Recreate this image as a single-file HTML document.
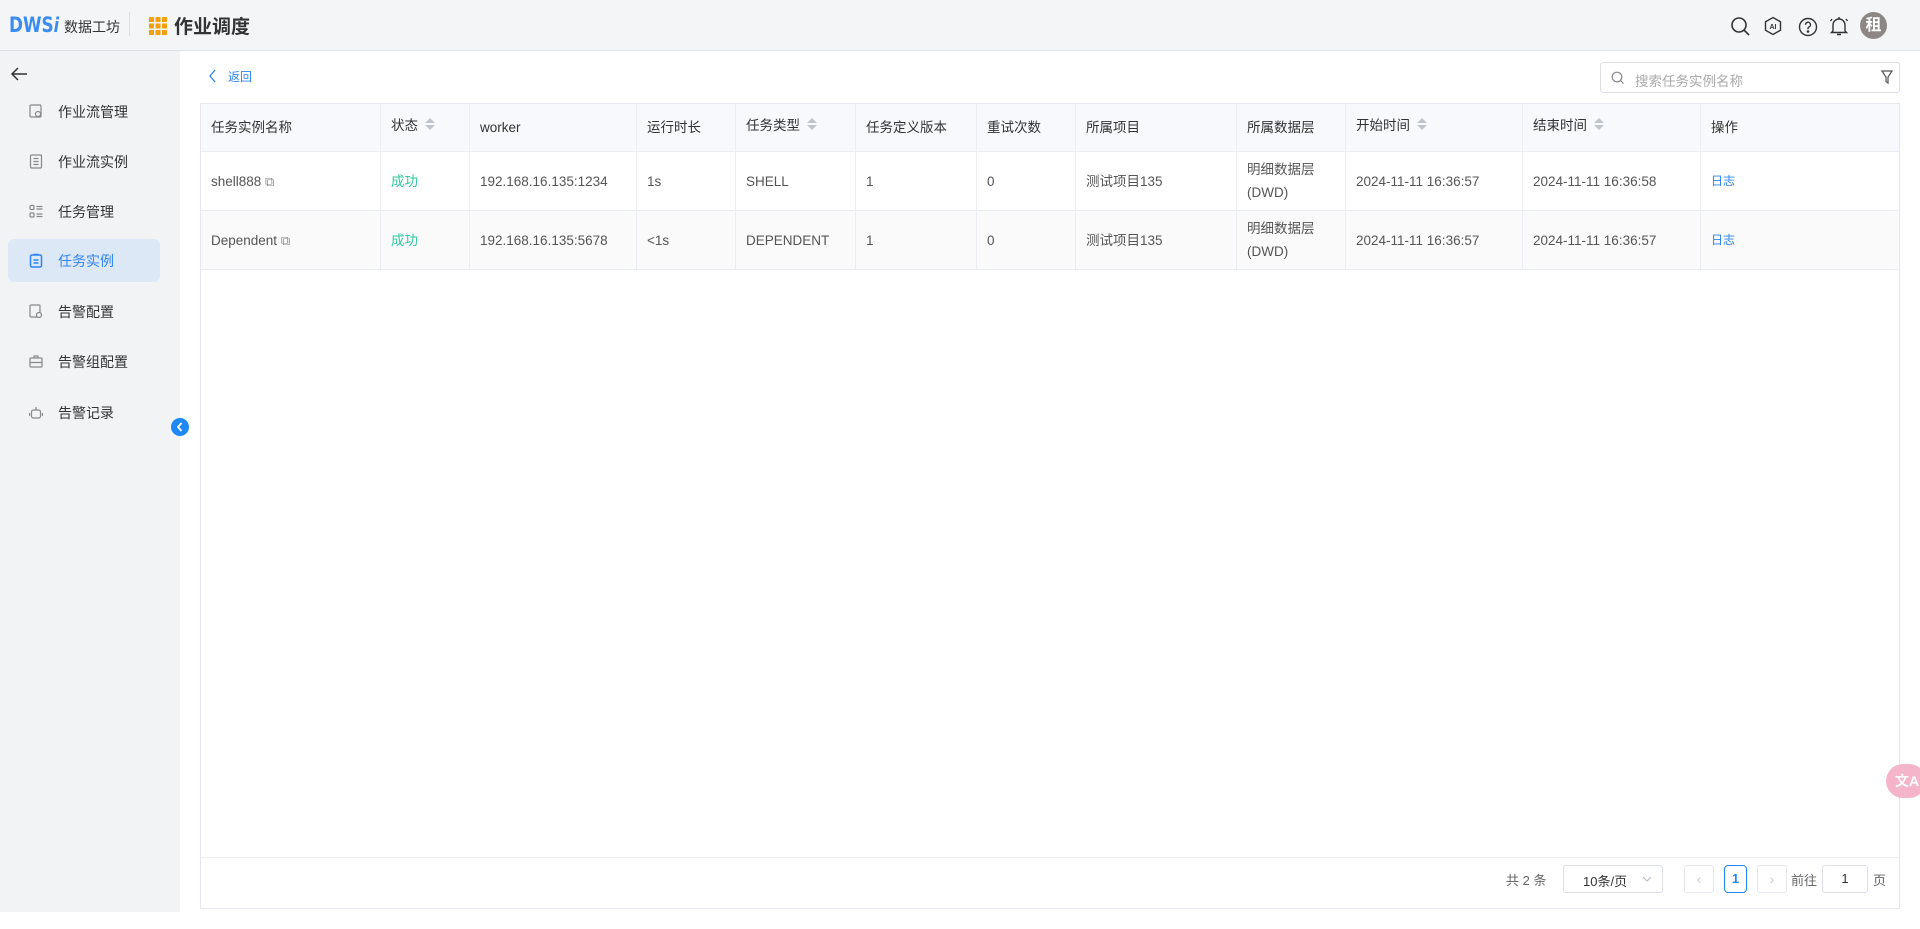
<!DOCTYPE html>
<html><head><meta charset="utf-8"><style>
*{box-sizing:border-box;margin:0;padding:0}
body{width:1920px;height:929px;overflow:hidden;background:#fff;font-family:"Liberation Sans","Noto Sans CJK SC",sans-serif;color:#333;position:relative}
.hdr{position:absolute;left:0;top:0;width:1920px;height:51px;background:#f4f5f7;border-bottom:1px solid #dcdfe6}
.side{position:absolute;left:0;top:51px;width:180px;height:861px;background:#f2f3f5}
.item{position:absolute;left:8px;width:152px;height:43px;display:flex;align-items:center;padding-left:50px;font-size:14px;color:#333}
.item svg{position:absolute;left:21px;top:14px}
.item.act{background:#dde8f6;color:#2e84f0;border-radius:6px}
.tbl{position:absolute;left:200px;top:103px;width:1700px;height:806px;border:1px solid #e4e7ed}
.row{position:absolute;left:0;width:1698px;border-bottom:1px solid #ebeef5;display:flex}
.c{border-right:1px solid #ebeef5;padding-left:10px;font-size:13.5px;color:#555;display:flex;align-items:center;height:100%;line-height:23px}
.h .c{color:#333}
.sort{display:inline-block;margin-left:7px;vertical-align:middle;width:10px;padding-top:4px}
.sort i{display:block;width:0;height:0;border-left:5px solid transparent;border-right:5px solid transparent}
</style></head><body>
<div class="hdr">
 <div style="position:absolute;left:9px;top:13px;font:900 21px 'DejaVu Sans','Liberation Sans',sans-serif;color:#3b8cf0;white-space:nowrap;transform:scaleX(0.8);transform-origin:left">DWS<span style="font-style:italic;font-size:20px">i</span></div>
 <div style="position:absolute;left:64px;top:17px;font-size:14px;color:#333">数据工坊</div>
 <div style="position:absolute;left:129px;top:12px;width:1px;height:24px;background:#dcdfe6"></div>
 <svg style="position:absolute;left:149px;top:17px" width="18" height="18" viewBox="0 0 18 18" fill="#f5a10b"><rect x="0" y="0" width="5" height="5"/><rect x="6.5" y="0" width="5" height="5"/><rect x="13" y="0" width="5" height="5"/><rect x="0" y="6.5" width="5" height="5"/><rect x="6.5" y="6.5" width="5" height="5"/><rect x="13" y="6.5" width="5" height="5"/><rect x="0" y="13" width="5" height="5"/><rect x="6.5" y="13" width="5" height="5"/><rect x="13" y="13" width="5" height="5"/></svg>
 <div style="position:absolute;left:174px;top:12px;font-size:19px;font-weight:bold;color:#333">作业调度</div>
 <svg style="position:absolute;left:1730px;top:16px" width="22" height="22" viewBox="0 0 22 22" fill="none" stroke="#333" stroke-width="1.6"><circle cx="9" cy="9" r="7"/><path d="M14 14l5 5"/></svg>
 <svg style="position:absolute;left:1763px;top:16px" width="20" height="20" viewBox="0 0 20 20" fill="none" stroke="#333" stroke-width="1.4"><path d="M10 1.5l7.5 4.3v8.4L10 18.5l-7.5-4.3V5.8z"/><text x="10" y="13" font-size="7" font-weight="bold" text-anchor="middle" fill="#333" stroke="none" font-family="Liberation Sans">AI</text></svg>
 <svg style="position:absolute;left:1798px;top:17px" width="20" height="20" viewBox="0 0 20 20" fill="none" stroke="#333" stroke-width="1.4"><circle cx="10" cy="10" r="8.5"/><path d="M7.5 7.8a2.5 2.5 0 1 1 3.3 2.3c-.6.3-.8.7-.8 1.4v.7"/><circle cx="10" cy="14.5" r=".6" fill="#333"/></svg>
 <svg style="position:absolute;left:1829px;top:15px" width="20" height="22" viewBox="0 0 20 22" fill="none" stroke="#333" stroke-width="1.4"><path d="M4 16V10a6 6 0 0 1 12 0v6l1.5 1.5h-15z"/><path d="M8 19.5h4M10 2v2M3 4l-1.5 2M17 4l1.5 2"/></svg>
 <div style="position:absolute;left:1860px;top:12px;width:27px;height:27px;border-radius:50%;background:#8c8785;color:#fff;font-size:16px;font-weight:bold;text-align:center;line-height:27px">租</div>
</div>
<div class="side">
 <svg style="position:absolute;left:10px;top:15px" width="18" height="16" viewBox="0 0 18 16" fill="none" stroke="#333" stroke-width="1.5"><path d="M17 8H2M8 2L2 8l6 6"/></svg>
</div>
<div class="item" style="top:90px"><svg width="14" height="15" viewBox="0 0 14 15" fill="none" stroke="#888" stroke-width="1.2"><rect x="1" y="1" width="11" height="12" rx="1"/><circle cx="9" cy="10" r="2.5"/></svg>作业流管理</div>
<div class="item" style="top:140px"><svg width="14" height="15" viewBox="0 0 14 15" fill="none" stroke="#888" stroke-width="1.2"><rect x="1.5" y="1" width="11" height="13" rx="1"/><path d="M4.5 4.5h5M4.5 7.5h5M4.5 10.5h5"/></svg>作业流实例</div>
<div class="item" style="top:190px"><svg width="14" height="15" viewBox="0 0 14 15" fill="none" stroke="#888" stroke-width="1.2"><rect x="1" y="1.5" width="4" height="4" rx="1"/><rect x="1" y="9" width="4" height="4" rx="1"/><path d="M7.5 2.5h6M7.5 5h6M7.5 10h6M7.5 12.5h6"/></svg>任务管理</div>
<div class="item act" style="top:239px"><svg width="14" height="15" viewBox="0 0 14 15" fill="none" stroke="#2e84f0" stroke-width="1.5"><rect x="1.5" y="2" width="11" height="12" rx="1.5"/><path d="M4.5 1.5h5M4.5 7h5M4.5 10h5"/></svg>任务实例</div>
<div class="item" style="top:290px"><svg width="14" height="15" viewBox="0 0 14 15" fill="none" stroke="#888" stroke-width="1.2"><rect x="1" y="1" width="10" height="12" rx="1"/><circle cx="10" cy="11" r="2.5" fill="#f2f3f5"/></svg>告警配置</div>
<div class="item" style="top:340px"><svg width="14" height="15" viewBox="0 0 14 15" fill="none" stroke="#888" stroke-width="1.2"><rect x="1" y="4" width="12" height="9" rx="1"/><path d="M5 4V2h4v2M1 8.5h12"/></svg>告警组配置</div>
<div class="item" style="top:391px"><svg width="14" height="15" viewBox="0 0 14 15" fill="none" stroke="#888" stroke-width="1.2"><rect x="2.5" y="5" width="9" height="8" rx="2"/><path d="M7 5V2M0.5 8v3M13.5 8v3"/></svg>告警记录</div>
<div style="position:absolute;left:171px;top:418px;width:18px;height:18px;border-radius:50%;background:#1e88f5"><svg width="18" height="18" viewBox="0 0 18 18" fill="none" stroke="#fff" stroke-width="1.8"><path d="M10.5 5L7 9l3.5 4"/></svg></div>

<svg style="position:absolute;left:208px;top:69px" width="10" height="14" viewBox="0 0 10 14" fill="none" stroke="#2e84f0" stroke-width="1.3"><path d="M7 1L2 7l5 6"/></svg>
<div style="position:absolute;left:228px;top:68px;font-size:12px;color:#2e84f0">返回</div>
<div style="position:absolute;left:1600px;top:62px;width:300px;height:31px;border:1px solid #dcdfe6;border-radius:3px">
 <svg style="position:absolute;left:10px;top:8px" width="14" height="14" viewBox="0 0 14 14" fill="none" stroke="#888" stroke-width="1.2"><circle cx="6" cy="6" r="4.8"/><path d="M9.5 9.5l3 3"/></svg>
 <div style="position:absolute;left:34px;top:7px;font-size:13.5px;color:#aaa">搜索任务实例名称</div>
 <svg style="position:absolute;left:280px;top:7px" width="12" height="15" viewBox="0 0 12 15" fill="none" stroke="#555" stroke-width="1.2"><path d="M1 1h10L7 7v6L5 11.5V7z"/></svg>
</div>

<div class="tbl">
 <div class="row h" style="top:0;height:48px;background:#f7f9fc">
  <div class="c" style="width:180px">任务实例名称</div>
  <div class="c" style="width:89px;align-items:flex-start;padding-top:10px">状态<span class="sort"><i style="border-bottom:5px solid #c0c4cc;margin-bottom:2px"></i><i style="border-top:5px solid #c0c4cc"></i></span></div>
  <div class="c" style="width:167px">worker</div>
  <div class="c" style="width:99px">运行时长</div>
  <div class="c" style="width:120px;align-items:flex-start;padding-top:10px">任务类型<span class="sort"><i style="border-bottom:5px solid #c0c4cc;margin-bottom:2px"></i><i style="border-top:5px solid #c0c4cc"></i></span></div>
  <div class="c" style="width:121px">任务定义版本</div>
  <div class="c" style="width:99px">重试次数</div>
  <div class="c" style="width:161px">所属项目</div>
  <div class="c" style="width:109px">所属数据层</div>
  <div class="c" style="width:177px;align-items:flex-start;padding-top:10px">开始时间<span class="sort"><i style="border-bottom:5px solid #c0c4cc;margin-bottom:2px"></i><i style="border-top:5px solid #c0c4cc"></i></span></div>
  <div class="c" style="width:178px;align-items:flex-start;padding-top:10px">结束时间<span class="sort"><i style="border-bottom:5px solid #c0c4cc;margin-bottom:2px"></i><i style="border-top:5px solid #c0c4cc"></i></span></div>
  <div class="c" style="width:198px;border-right:none">操作</div>
 </div>
 <div class="row" style="top:48px;height:59px">
  <div class="c" style="width:180px">shell888&nbsp;<span style="color:#888;font-size:13px">⧉</span></div>
  <div class="c" style="width:89px;color:#2fc9a0">成功</div>
  <div class="c" style="width:167px">192.168.16.135:1234</div>
  <div class="c" style="width:99px">1s</div>
  <div class="c" style="width:120px">SHELL</div>
  <div class="c" style="width:121px">1</div>
  <div class="c" style="width:99px">0</div>
  <div class="c" style="width:161px">测试项目135</div>
  <div class="c" style="width:109px">明细数据层<br>(DWD)</div>
  <div class="c" style="width:177px">2024-11-11 16:36:57</div>
  <div class="c" style="width:178px">2024-11-11 16:36:58</div>
  <div class="c" style="width:198px;border-right:none;color:#2e84f0;font-size:12px">日志</div>
 </div>
 <div class="row" style="top:107px;height:59px;background:#fafafa">
  <div class="c" style="width:180px">Dependent&nbsp;<span style="color:#888;font-size:13px">⧉</span></div>
  <div class="c" style="width:89px;color:#2fc9a0">成功</div>
  <div class="c" style="width:167px">192.168.16.135:5678</div>
  <div class="c" style="width:99px">&lt;1s</div>
  <div class="c" style="width:120px">DEPENDENT</div>
  <div class="c" style="width:121px">1</div>
  <div class="c" style="width:99px">0</div>
  <div class="c" style="width:161px">测试项目135</div>
  <div class="c" style="width:109px">明细数据层<br>(DWD)</div>
  <div class="c" style="width:177px">2024-11-11 16:36:57</div>
  <div class="c" style="width:178px">2024-11-11 16:36:57</div>
  <div class="c" style="width:198px;border-right:none;color:#2e84f0;font-size:12px">日志</div>
 </div>
 <div style="position:absolute;left:0;top:753px;width:1698px;border-top:1px solid #ebeef5"></div>
 <div style="position:absolute;left:1305px;top:766px;font-size:13px;color:#666">共 2 条</div>
 <div style="position:absolute;left:1362px;top:761px;width:100px;height:28px;border:1px solid #dcdfe6;border-radius:3px;font-size:13px;color:#333;padding:5px 0 0 19px">10条/页<svg style="position:absolute;right:10px;top:10px" width="10" height="7" viewBox="0 0 10 7" fill="none" stroke="#bbb" stroke-width="1.1"><path d="M1 1l4 4 4-4"/></svg></div>
 <div style="position:absolute;left:1483px;top:761px;width:30px;height:28px;border:1px solid #e4e7ed;border-radius:3px;color:#ccc;text-align:center;line-height:26px;font-size:14px">‹</div>
 <div style="position:absolute;left:1523px;top:761px;width:23px;height:28px;border:1px solid #1e88f5;border-radius:4px;color:#1e88f5;text-align:center;line-height:26px;font-size:13px;font-weight:bold">1</div>
 <div style="position:absolute;left:1556px;top:761px;width:30px;height:28px;border:1px solid #e4e7ed;border-radius:3px;color:#ccc;text-align:center;line-height:26px;font-size:14px">›</div>
 <div style="position:absolute;left:1590px;top:766px;font-size:13px;color:#666">前往</div>
 <div style="position:absolute;left:1621px;top:761px;width:46px;height:28px;border:1px solid #dcdfe6;border-radius:3px;text-align:center;line-height:26px;font-size:13px;color:#333">1</div>
 <div style="position:absolute;left:1672px;top:766px;font-size:13px;color:#666">页</div>
</div>
<div style="position:absolute;left:1886px;top:764px;width:40px;height:34px;border-radius:17px;background:#f4b5cb;color:#fff;font-size:14px;font-weight:bold;padding:7px 0 0 9px">文A</div>
</body></html>
